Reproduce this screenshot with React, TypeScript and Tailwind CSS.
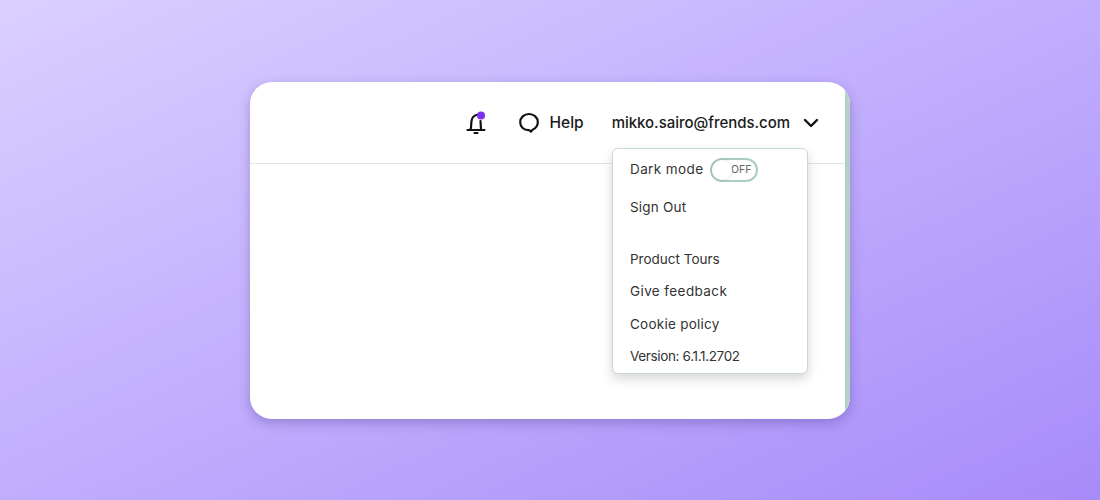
import React from "react";

function Bell() {
  return (
    <svg width="20" height="24" viewBox="0 0 20 24" fill="none" className="block">
      <path d="M4.5 18.5 C5.5 16 5 13 5.5 10 C6 6.5 8 4.5 11 3.8" stroke="#111" strokeWidth="2.2" strokeLinecap="round" />
      <path d="M14.5 10 L15 18.5" stroke="#111" strokeWidth="2.2" strokeLinecap="round" />
      <path d="M1.5 19 H18.5" stroke="#111" strokeWidth="2.2" strokeLinecap="round" />
      <path d="M8.5 22 H11.5" stroke="#111" strokeWidth="2.2" strokeLinecap="round" />
      <circle cx="15" cy="4.5" r="4" fill="#7c2ff0" />
    </svg>
  );
}

function Bubble() {
  return (
    <svg width="22" height="22" viewBox="0 0 22 22" fill="none" className="block">
      <path d="M11 2 C6 2 2.2 5.5 2.2 10.2 C2.2 15 6 18.2 10.5 18.2 C11.6 18.2 12.2 19 13 19.6 C13.6 18.8 13.9 18.2 14.8 17.6 C17.8 16 19.8 13.6 19.8 10.2 C19.8 5.5 16 2 11 2 Z" stroke="#111" strokeWidth="2.2" strokeLinejoin="round" />
    </svg>
  );
}

function MenuItem({ children, className = "" }: { children: React.ReactNode; className?: string }) {
  return <div className={`text-[13.5px] leading-[20px] text-[#333] ${className}`}>{children}</div>;
}

export default function App() {
  return (
    <div
      className="w-[1100px] h-[500px] flex items-center justify-center bg-gradient-to-br from-[#dbcfff] to-[#a78bf9]"
      style={{ fontFamily: '"Inter", "Noto Sans", sans-serif' }}
    >
      <div className="relative w-[600px] h-[337px] rounded-[22px] shadow-[0_4px_12px_rgba(60,40,120,0.3)]">
        <div className="w-full h-full flex rounded-[22px] overflow-hidden bg-white">
          <div className="flex-1 min-w-0">
            <div className="h-[82px] border-b border-[#dbe9e5] flex items-center justify-end pr-[26px] pt-[2px]">
              <div className="mr-[32px] ml-[1px]">
                <Bell />
              </div>
              <div className="mr-[28px] flex items-center gap-[9px]">
                <Bubble />
                <span className="text-[15.5px] font-medium text-[#1a1a1a]">Help</span>
              </div>
              <span className="text-[15px] font-medium text-[#1a1a1a] tracking-[-0.02px]">mikko.sairo@frends.com</span>
              <svg width="16" height="10" viewBox="0 0 16 10" fill="none" className="ml-[13px]">
                <path d="M2 2 L8 8 L14 2" stroke="#111" strokeWidth="2.4" strokeLinecap="round" strokeLinejoin="round" />
              </svg>
            </div>
          </div>
          <div className="w-[5px] bg-[#b5d0c9]" />
        </div>
        <div className="absolute left-[362px] top-[66px] w-[196px] h-[226px] bg-white border border-[#c8d8d4] rounded-[6px] shadow-[0_5px_12px_rgba(0,0,0,0.16)] pl-[17px] pt-[9px] flex flex-col">
          <div className="flex items-center gap-[7px] h-[24px]">
            <MenuItem className="tracking-[0.4px] pb-[2px]">Dark mode</MenuItem>
            <div className="w-[48px] h-[24px] rounded-full border-2 border-[#a9cdc3] bg-white flex items-center justify-end pr-[5px] relative">
              <span className="absolute left-0 top-0 w-[20px] h-[20px] rounded-full bg-white shadow-[0_0_3px_rgba(0,0,0,0.2)]" />
              <span className="text-[10.5px] text-[#666]">OFF</span>
            </div>
          </div>
          <MenuItem className="mt-[15px] tracking-[0.2px]">Sign Out</MenuItem>
          <MenuItem className="mt-[32px]">Product Tours</MenuItem>
          <MenuItem className="mt-[12px] tracking-[0.4px]">Give feedback</MenuItem>
          <MenuItem className="mt-[13px] tracking-[0.25px]">Cookie policy</MenuItem>
          <MenuItem className="mt-[12px] tracking-[-0.35px]">Version: 6.1.1.2702</MenuItem>
        </div>
      </div>
    </div>
  );
}
